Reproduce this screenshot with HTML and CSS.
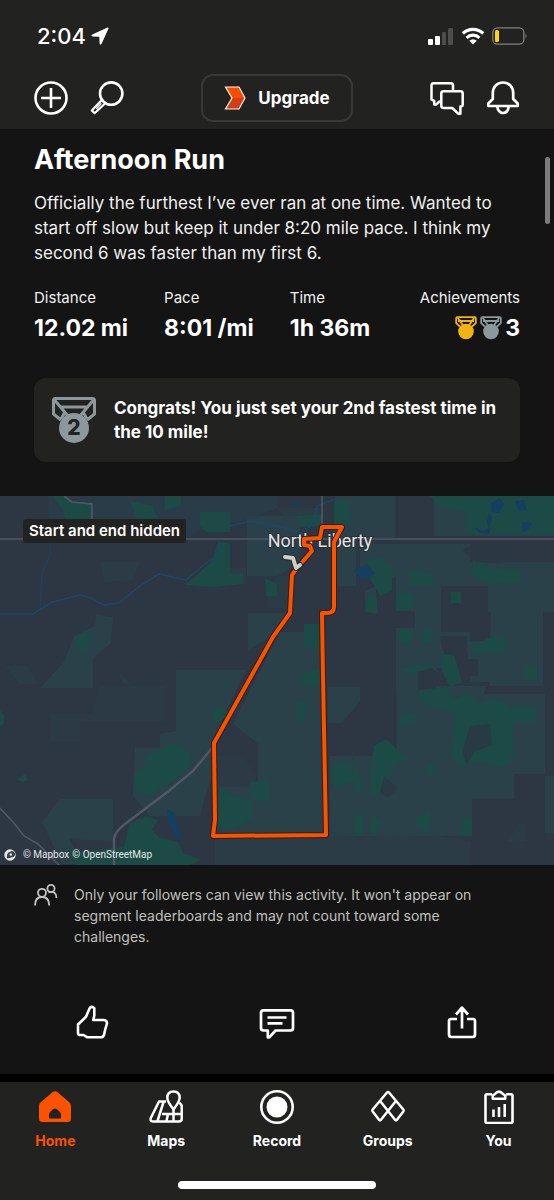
FILE: index.html
```html
<!DOCTYPE html>
<html lang="en">
<head>
  <meta charset="UTF-8" />
  <meta name="viewport" content="width=device-width, initial-scale=1" />
  <title>Afternoon Run</title>
  <link rel="stylesheet" href="styles.css">
</head>
<body>

<header>
  <div class="status-bar">
    <div class="clock">
      <span>2:04</span>
      <svg width="18" height="18" viewBox="0 0 18 18"><path d="M16 .7Q18 0 17.3 2L10.6 16.7Q9.2 18.6 8.6 16.4L8.3 9.8 1.6 9.5Q-.6 8.8 1.3 7.4Z" fill="#fff"/></svg>
    </div>
    <div class="signals">
      <svg width="26" height="18" viewBox="0 0 26 18">
        <rect x="0" y="12" width="5" height="6" rx="1" fill="#fff"/>
        <rect x="7" y="9" width="5" height="9" rx="1" fill="#fff"/>
        <rect x="14" y="5" width="4" height="13" rx="1" fill="#4d4d4b"/>
        <rect x="20" y="1" width="5" height="17" rx="1" fill="#4d4d4b"/>
      </svg>
      <svg width="24" height="18" viewBox="0 0 24 18">
        <path d="M1.8 6.5A14.6 14.6 0 0 1 22.2 6.5M5.6 10.8A9.2 9.2 0 0 1 18.4 10.8" fill="none" stroke="#fff" stroke-width="3.2"/>
        <path d="M12 17.5L8.2 13.8Q12 10.8 15.8 13.8Z" fill="#fff"/>
      </svg>
      <svg width="36" height="18" viewBox="0 0 36 18">
        <rect x=".8" y=".8" width="31" height="16.4" rx="4.5" fill="none" stroke="#80807e" stroke-width="1.3"/>
        <rect x="3" y="3" width="4" height="12" rx="1.6" fill="#ffd60a"/>
        <path d="M33.5 6.5Q35.6 9 33.5 11.5Z" fill="#80807e"/>
      </svg>
    </div>
  </div>
  <div class="toolbar">
    <div class="tools">
      <button class="icon-btn" aria-label="Add">
        <svg width="34" height="34" viewBox="0 0 34 34" fill="none" stroke="#fff" stroke-width="2.6"><circle cx="17" cy="17" r="15.5"/><path d="M17 7V27M7 17H27"/></svg>
      </button>
      <button class="icon-btn" aria-label="Search">
        <svg width="34" height="34" viewBox="0 0 34 34" fill="none" stroke="#fff" stroke-width="2.6" stroke-linejoin="round" stroke-linecap="round"><circle cx="21.2" cy="12.6" r="11.2"/><path d="M12 18.8L1.8 29.4 4.6 32.2 15.3 22.3" stroke-width="2.2"/><path d="M11 22.8L6.6 27.4" stroke-width="1.4"/></svg>
      </button>
    </div>
    <button class="upgrade-btn">
      <svg width="22" height="24" viewBox="0 0 22 24"><path d="M1.500 1H15L21 12H8Z" fill="#fc4c02"/><path d="M8 12H21L15 23H1.500Z" fill="#cf3e14"/><path d="M1.500 1H15L21 12 15 23H1.500L8 12Z" fill="none" stroke="#fff3e6" stroke-width="1.200"/></svg>
      Upgrade
    </button>
    <div class="tools">
      <button class="icon-btn" aria-label="Messages">
        <svg width="34" height="34" viewBox="0 0 34 34" fill="none" stroke="#fff" stroke-width="2.5" stroke-linejoin="round"><path d="M23 10V4.500Q23 2.300 20.800 2.300H3.700Q1.500 2.300 1.500 4.500V18.700L4.200 19.800V23.600H6L10 20"/><path d="M13.500 10.200H30.500Q32.700 10.200 32.700 12.400V23.700Q32.700 25.500 30.400 25.500V32.700H28.200L22.300 27H13.500Q11.300 27 11.300 24.800V12.400Q11.300 10.200 13.500 10.200Z"/></svg>
      </button>
      <button class="icon-btn" aria-label="Notifications">
        <svg width="34" height="34" viewBox="0 0 34 34" fill="none" stroke="#fff" stroke-width="2.7" stroke-linejoin="round"><path d="M17 1.500C10.500 1.500 6.800 6.300 6.800 12.500V18L2.300 22.500V25H31.700V22.500L27.200 18V12.500C27.200 6.300 23.500 1.500 17 1.500Z"/><path d="M11.200 25.500C12 30 14.200 32 17 32S22 30 22.800 25.500"/></svg>
      </button>
    </div>
  </div>
</header>

<main>
  <div class="scroll-thumb"></div>

  <section class="summary">
    <h1>Afternoon Run</h1>
    <p class="description">Officially the furthest I’ve ever ran at one time. Wanted to start off slow but keep it under 8:20 mile pace. I think my second 6 was faster than my first 6.</p>

    <div class="stats">
      <div class="stat">
        <span class="label">Distance</span>
        <span class="value">12.02 mi</span>
      </div>
      <div class="stat">
        <span class="label">Pace</span>
        <span class="value">8:01 /mi</span>
      </div>
      <div class="stat">
        <span class="label">Time</span>
        <span class="value">1h 36m</span>
      </div>
      <div class="stat achievements">
        <span class="label">Achievements</span>
        <span class="value">
          <svg class="gold" width="22" height="24" viewBox="0 0 22 24"><use href="#medal"/></svg>
          <svg class="silver" width="22" height="24" viewBox="0 0 22 24"><use href="#medal"/></svg>
          3
        </span>
      </div>
    </div>

    <div class="congrats">
      <svg width="44" height="46" viewBox="0 0 44 46">
        <g fill="none" stroke="#8b989c" stroke-width="3" stroke-linejoin="round">
          <path d="M3.5 1.5H40.5Q42.5 1.5 42.5 3.5V17L35 23M9 23L1.5 17V3.5Q1.5 1.5 3.5 1.5"/>
          <path d="M2.5 3L16 19M41.5 3L28 19M8 10H36M13 15L9 22M31 15L35 22"/>
        </g>
        <circle cx="22" cy="31" r="15" fill="#8b989c"/>
        <text x="22" y="38" text-anchor="middle" class="medal-number">2</text>
      </svg>
      <p>Congrats! You just set your 2nd fastest time in the 10 mile!</p>
    </div>
  </section>

  <section class="map">
    <svg class="map-canvas" viewBox="0 0 554 369">
      <rect width="554" height="369" fill="#2c3743"/>

      <!-- farmland -->
      <g fill="#2a414a">
        <path d="M50 0H278V12L240 26H215L190 40 160 36 130 44H100L75 34H50Z" opacity=".55"/>
        <path d="M247 20H300V66L278 80H247ZM96 119L113 121 111 147 93 162V192H40L64 166 74 140 95 130Z"/>
        <path d="M248 117H290L270 140 248 155ZM176 174H246L214 240 213 275 200 320H150L133 300 135 252H160V238L176 235Z"/>
        <path d="M233 228L280 136H322L326 339H215V290L258 292V248Z"/>
        <path d="M60 303H113V345L70 343 80 368H62L42 326Z"/>
        <path d="M335 0H395V42H356V90H335ZM434 0H554V40H434Z"/>
        <path d="M360 48H470V66H554V116H488V90H441V136H470V158H498V186H470V155H444V172H418V198H396V132H415V115H396V80L365 95V116H376V82L360 75Z"/>
        <path d="M492 90H543V190H490V165H468V145H490ZM397 198H545V278H514V303H472V340H330V260H397Z"/>
        <path d="M328 191H360V205L342 227H328ZM436 190H486L477 220V275H436ZM545 280H554V337H545Z"/>
        <path d="M100 190H165V225H80V245H50V218H92ZM217 260H240L255 276V292H217Z" opacity=".35"/>
        <path d="M322 339L415 336 470 345V369H215V342Z" opacity=".5"/>
        <path d="M100 66H140L133 84 104 86ZM278 12H320V30H290ZM230 88H246V72H230ZM5 170H28L38 188H20ZM118 174L133 190 122 186ZM508 345H526V328H518ZM278 80H290V112H268V92Z" opacity=".5"/>
      </g>

      <!-- woods -->
      <g fill="#1c4a46">
        <path d="M52 0H64L72 6 92 8V24H66L62 12ZM130 5L152 10 160 26 140 32ZM165 0H181V9L165 15ZM200 16H230V36H207L200 30Z"/>
        <path d="M218 45L230 48V78H243V88L213 91 185 89 196 80 212 65ZM75 141L85 136 92 139 88 151 80 159Z"/>
        <path d="M265 82L277 88V100H266ZM296 20L323 18 320 30 300 31ZM334 5H350V30H341L334 40Z"/>
        <path d="M0 214L4 219V228L0 230ZM16 284L25 278 28 284 23 286ZM212 215L218 210 230 216 221 225 213 226Z"/>
        <path d="M160 254L170 247 188 254 191 266 179 282 161 293 150 299 134 295V278L145 270 147 260Z"/>
        <path d="M129 328L145 320 158 324 152 334 160 342 178 346 183 357 201 364 190 369H76L66 349 79 356 124 351Z"/>
        <path d="M219 290L231 299 252 305V324L233 332H218ZM250 286L269 284V305L251 303Z"/>
        <path d="M430 0H554V38H466V16L440 12ZM366 65L381 60 392 72V95L380 100 370 82ZM396 97L414 98V114H397Z"/>
        <path d="M410 75L433 77V90H408ZM473 62L492 72 522 75 521 87 488 88 472 79ZM450 96H461V107H451Z"/>
        <path d="M400 132L414 135 410 148 396 144ZM424 132L432 132 430 146 423 147ZM304 128H322V152H304ZM301 178L322 172V191L302 190ZM297 205L307 207 305 226 297 224Z"/>
        <path d="M470 150L495 140H506V157H474ZM442 158L455 160 462 186 450 191 442 175ZM398 173L430 168 444 180 432 172 410 178Z"/>
        <path d="M417 194L446 191 453 203 470 197 477 207 495 203 513 211H535V227H513V265L500 272 480 265 460 272 452 260 455 218 422 207Z"/>
        <path d="M400 219L415 217V227L400 230ZM374 250L386 243 397 253 409 263 393 270 386 292 372 302 370 275ZM331 270L347 264 356 285 334 291Z"/>
        <path d="M352 255L361 286 362 304 355 295ZM354 322L363 318V340H355ZM372 318L381 326 375 342 370 335ZM415 323L430 315V338L417 330ZM462 322H472V340H462ZM428 267L435 270 433 280 427 279Z"/>
        <path d="M524 170H537V183H524ZM367 98L377 102V118L366 116Z"/>
      </g>
      <g fill="#2c3743">
        <path d="M470 230L490 228 492 249 474 256 467 269 462 256ZM462 54L475 48H503V68L475 66ZM384 280L398 292 388 302 380 296Z" opacity=".8"/>
        <path d="M440 140H467V163H478V180H460L455 160 443 155Z"/>
      </g>

      <!-- water -->
      <g fill="#143f61">
        <path d="M354 74L368 68 375 78 362 85ZM491 7L500 2 504 8 499 17 491 16ZM515 5L524 4 527 14 519 15ZM522 26L532 27 529 33 523 36ZM474 31L483 35 491 32 489 38 480 37ZM489 17L492 22 489 32 487 25ZM167 313L175 317 177 328 182 342 177 343 169 328ZM293 3L299 8 297 13Z"/>
      </g>
      <g fill="none" stroke="#1b4869" stroke-width="1.3">
        <path d="M0 118H33L52 106 80 99 91 102 104 109 119 107 140 90 159 78 186 84 200 72 219 58V48M230 30L250 25 280 31 304 38 314 24 317 10 338 2"/>
        <path d="M49 0L50 60 42 76 40 112" stroke="#20405a"/>
      </g>

      <!-- roads -->
      <g fill="none" stroke="#525765" stroke-width="1.6">
        <path d="M0 43H554M322 0V31M64 0L72 6 92 8V42"/>
        <path d="M213 251L193 275 170 294 125 328Q114 336 114 344V369" stroke-width="2.4"/>
        <path d="M0 312L13 326 24 340 38 348 50 360 59 369"/>
      </g>

      <text x="320" y="51" text-anchor="middle" class="place">North Liberty</text>

      <!-- route, with the hidden start drawn in grey -->
      <g fill="none" stroke-linejoin="round" stroke-linecap="round">
        <path d="M322 31H342L334 46V111Q334 117 327 117H322L323 180 326 339 213 340 215 324 214 247 273 141 290 117 292 79 297 72 312 55 310 50 304 49V43L320 42Z" stroke="#30201a" stroke-width="6"/>
        <path d="M322 31H342L334 46V111Q334 117 327 117H322L323 180 326 339 213 340 215 324 214 247 273 141 290 117 292 79 297 72 312 55 310 50 304 49V43L320 42Z" stroke="#fc5200" stroke-width="4"/>
        <path d="M285 61L293 62 296 72 300 69" stroke="#282b2d" stroke-width="6"/>
        <path d="M285 61L293 62 296 72 300 69" stroke="#cfcfca" stroke-width="4"/>
      </g>
    </svg>
    <span class="map-note">Start and end hidden</span>
    <div class="attribution">
      <svg width="12" height="12" viewBox="0 0 12 12"><circle cx="6" cy="6" r="5.7" fill="#e6e8ea"/><path d="M3 9.2Q2.2 4 5.8 3A3.1 3.1 0 1 1 7.8 8.3Q5.5 9.6 3 9.2Z" fill="#39424d"/><circle cx="6.8" cy="5.5" r="1.2" fill="#e6e8ea"/></svg>
      <a href="#">© Mapbox</a>
      <a href="#">© OpenStreetMap</a>
    </div>
  </section>

  <div class="privacy">
    <svg width="24" height="24" viewBox="0 0 24 24" fill="none" stroke="#c4c4c2" stroke-width="1.8"><circle cx="8" cy="8.8" r="4"/><path d="M1 21.5C1 16 3.5 13 8 13S15.2 16 15.2 21.5"/><circle cx="17" cy="4.5" r="3.6"/><path d="M14.5 8.3Q22.500 6.500 22.500 14"/></svg>
    <p>Only your followers can view this activity. It won't appear on segment leaderboards and may not count toward some challenges.</p>
  </div>

  <div class="actions">
    <button class="icon-btn" aria-label="Give kudos">
      <svg width="34" height="34" viewBox="0 0 34 34" fill="none" stroke="#fff" stroke-width="2.6" stroke-linejoin="round"><path d="M3 19.5L11 11.8 14.5 3.5Q16.5.4 19.3 3.2V10.7L18.2 15H29Q32 15.2 32 18.3L30.2 24.5 29 30Q28.3 32.2 26 32.2H12L8.5 30H4.5Q3 29.8 3 28Z"/></svg>
    </button>
    <button class="icon-btn" aria-label="Comment">
      <svg width="36" height="34" viewBox="0 0 36 34" fill="none" stroke="#fff" stroke-width="2.7" stroke-linejoin="round"><path d="M4.5 5.3H31.500Q34 5.300 34 7.800V23Q34 25.500 31.500 25.500H16.500L10.300 32.300H8.800V25.500H4.500Q2 25.500 2 23V7.800Q2 5.300 4.500 5.300ZM8.500 12.500H27.500M8.500 18.300H23.500"/></svg>
    </button>
    <button class="icon-btn" aria-label="Share">
      <svg width="34" height="34" viewBox="0 0 34 34" fill="none" stroke="#fff" stroke-width="2.7" stroke-linejoin="round"><path d="M12 14H6Q4 14 4 16V29.5Q4 32 6.5 32H27.5Q30 32 30 29.5V16Q30 14 28 14H22M17 23.5V2.5M11 9.5L17 2.7 23 9.5"/></svg>
    </button>
  </div>
</main>

<nav class="tab-bar">
  <div class="tabs">
    <a href="#" class="tab active">
      <svg width="34" height="34" viewBox="0 0 34 34"><path fill-rule="evenodd" d="M14.5 2.2Q17 .4 19.5 2.2L31 12Q33 13.7 33 16V28.5Q33 32 29.5 32H4.5Q1 32 1 28.5V16Q1 13.7 3 12ZM11 28.5H23V24.5Q23 22.8 21.5 21.4L18.7 19Q17 17.8 15.3 19L12.5 21.4Q11 22.8 11 24.5Z" fill="#fc5200"/></svg>
      <span>Home</span>
    </a>
    <a href="#" class="tab">
      <svg width="34" height="34" viewBox="0 0 34 34" fill="none" stroke="#fff" stroke-width="2.5" stroke-linejoin="round"><path d="M17 11.5H10L1.8 28Q.8 31.5 4 31.5H30Q32.7 31.5 32.7 29V15.5L30.5 12.5M14.5 12L8.5 31M19 24L17.5 31M13 24H32M24.5 20V31"/><path d="M24.5 1.5Q30.7 1.5 30.7 8 30.5 11.5 24.5 19.5 18.3 11.5 18.3 8 18.3 1.5 24.5 1.5Z"/></svg>
      <span>Maps</span>
    </a>
    <a href="#" class="tab">
      <svg width="34" height="34" viewBox="0 0 34 34"><circle cx="17" cy="17" r="15.7" fill="none" stroke="#fff" stroke-width="2.6"/><circle cx="17" cy="17" r="10.5" fill="#fff"/></svg>
      <span>Record</span>
    </a>
    <a href="#" class="tab">
      <svg width="34" height="34" viewBox="0 0 34 34" fill="none" stroke="#fff" stroke-width="2.5" stroke-linejoin="round"><path d="M16 2.5Q17 1.3 18 2.5L32.3 19.5Q33 20.5 32.3 21.5L26 29.8Q25 31 24 29.8L9.5 11.5M16 2.5L1.7 19.5Q1 20.5 1.7 21.5L8 29.8Q9 31 10 29.8L24.5 11.5"/></svg>
      <span>Groups</span>
    </a>
    <a href="#" class="tab">
      <svg width="34" height="34" viewBox="0 0 34 34" fill="none" stroke="#fff" stroke-width="2.6" stroke-linejoin="round"><path d="M10 4.2H5Q3.5 4.2 3.5 5.7V31.5Q3.5 33 5 33H29Q30.5 33 30.5 31.5V5.7Q30.5 4.2 29 4.2H24"/><path d="M10.8 8.8V5.5L13 4Q17-.8 21 4L23.2 5.5V8.8ZM11.5 19.5V27M17 17V27M22.7 14V27"/></svg>
      <span>You</span>
    </a>
  </div>
  <div class="home-indicator"></div>
</nav>

<svg class="symbols" width="0" height="0">
  <symbol id="medal" viewBox="0 0 22 24">
    <path d="M2.2 1.2H19.8Q20.8 1.2 20.8 2.2V7.2L16.5 11M5.5 11L1.2 7.2V2.2Q1.2 1.2 2.2 1.2M3 5H19M3 2L8 9.5M19 2L14 9.5" fill="none" stroke="currentColor" stroke-width="1.8"/>
    <circle cx="11" cy="15.5" r="7.8" fill="currentColor"/>
  </symbol>
</svg>

</body>
</html>
```
FILE: styles.css
```css
* {
  box-sizing: border-box;
}

body {
  margin: 0;
  min-height: 100vh;
  display: flex;
  flex-direction: column;
  font-family: Inter, "Liberation Sans", sans-serif;
  background-color: #000;
  color: #fff;
}

h1, p {
  margin: 0;
}

svg {
  display: block;
  flex-shrink: 0;
}

.symbols {
  position: absolute;
}

header {
  background-color: #222220;
  padding: 24px 34px 7px;
}

.status-bar {
  display: flex;
  justify-content: space-between;
  align-items: center;
  height: 24px;
  margin-bottom: 26px;
  padding-left: 3px;
}

.clock {
  display: flex;
  align-items: center;
  gap: 5px;
  font-size: 22px;
  font-weight: 500;
}

.signals {
  display: flex;
  align-items: center;
  gap: 7px;
  margin-right: -8px;
}

.toolbar {
  display: flex;
  justify-content: space-between;
  align-items: center;
}

.tools {
  display: flex;
  gap: 22px;
}

.icon-btn {
  background: none;
  border: none;
  padding: 0;
  cursor: pointer;
}

.upgrade-btn {
  display: flex;
  justify-content: center;
  align-items: center;
  gap: 12px;
  width: 152px;
  height: 48px;
  background-color: #222220;
  color: #fff;
  border: 2px solid #383837;
  border-radius: 12px;
  font-family: inherit;
  font-size: 17px;
  font-weight: 700;
  cursor: pointer;
}

main {
  position: relative;
  flex: 1;
  background-color: #141414;
}

.scroll-thumb {
  position: absolute;
  top: 28px;
  right: 4px;
  width: 5px;
  height: 67px;
  border-radius: 3px;
  background-color: #7c7c7c;
}

.summary {
  padding: 15px 34px 34px;
}

h1 {
  font-size: 27px;
  line-height: 32px;
  font-weight: 700;
}

.description {
  margin-top: 15px;
  font-size: 17px;
  line-height: 25px;
  color: #f0f0f0;
}

.stats {
  display: flex;
  gap: 36px;
  margin-top: 22px;
}

.stat {
  display: flex;
  flex-direction: column;
  gap: 6px;
}

.label {
  font-size: 15px;
  line-height: 20px;
  color: #f0f0f0;
}

.value {
  display: flex;
  align-items: center;
  font-size: 23px;
  line-height: 28px;
  font-weight: 700;
}

.achievements {
  margin-left: auto;
  align-items: flex-end;
}

.achievements .value {
  gap: 3px;
}

.gold {
  color: #f0b310;
}

.silver {
  color: #8b989c;
}

.congrats {
  display: flex;
  align-items: center;
  gap: 18px;
  margin-top: 36px;
  padding: 18px;
  border-radius: 12px;
  background-color: #222220;
  font-size: 17px;
  line-height: 24px;
  font-weight: 700;
}

.medal-number {
  font-size: 21px;
  font-weight: 800;
  fill: #222220;
}

.map {
  position: relative;
}

.map-canvas {
  width: 100%;
  height: auto;
}

.place {
  font-family: Roboto, sans-serif;
  font-size: 18px;
  fill: #e4e4e4;
  stroke: #252d36;
  stroke-width: 2px;
  paint-order: stroke;
}

.map-note {
  position: absolute;
  top: 23px;
  left: 23px;
  padding: 0 6px;
  border-radius: 3px;
  background-color: #222220;
  font-size: 15px;
  line-height: 24px;
  font-weight: 600;
}

.attribution {
  position: absolute;
  left: 4px;
  bottom: 3px;
  display: flex;
  align-items: center;
  gap: 3px;
  font-family: Roboto, sans-serif;
  font-size: 10px;
  line-height: 14px;
}

.attribution svg {
  margin-right: 4px;
}

.attribution a {
  color: #e4e6e8;
  text-decoration: none;
}

.privacy {
  display: flex;
  gap: 16px;
  padding: 19px 64px 24px 34px;
  font-size: 14px;
  line-height: 21px;
  color: #c0c0be;
}

.actions {
  display: grid;
  grid-template-columns: repeat(3, 1fr);
  justify-items: center;
  padding: 34px 0;
}

.tab-bar {
  margin-top: 8px;
  padding: 8px 0 11px;
  background-color: #222220;
}

.tabs {
  display: grid;
  grid-template-columns: repeat(5, 1fr);
}

.tab {
  display: flex;
  flex-direction: column;
  align-items: center;
  gap: 7px;
  color: #fff;
  font-size: 14px;
  line-height: 20px;
  font-weight: 700;
  text-decoration: none;
}

.tab.active {
  color: #fc5200;
}

.home-indicator {
  width: 198px;
  height: 8px;
  margin: 30px auto 0;
  border-radius: 4px;
  background-color: #fff;
}
```
